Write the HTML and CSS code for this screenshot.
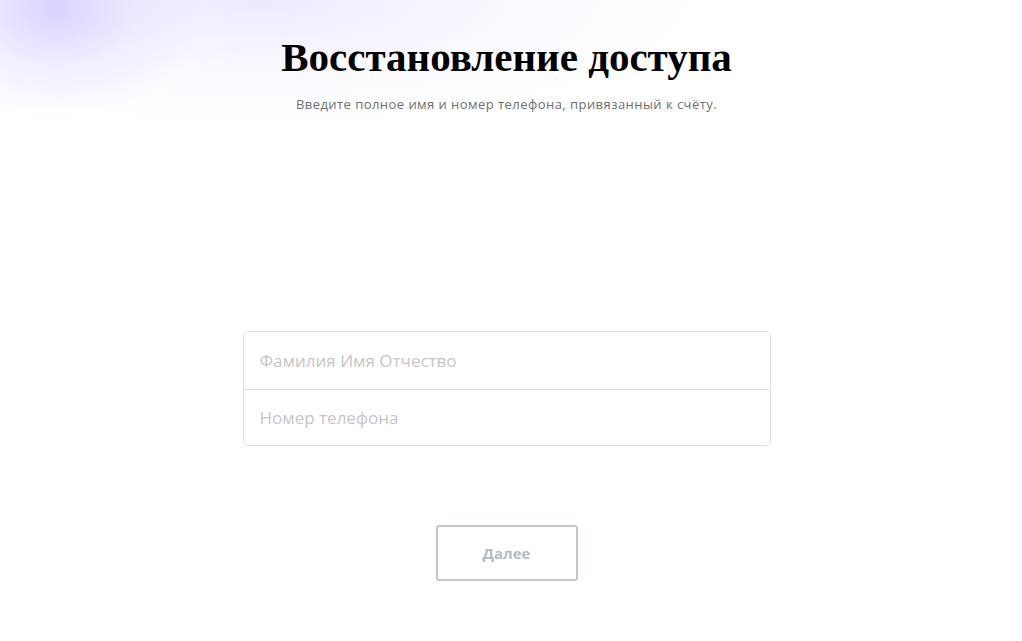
FILE: index.html
```html
<!DOCTYPE html>
<html lang="ru">
<head>
<meta charset="utf-8">
<title>Восстановление доступа</title>
<link rel="stylesheet" href="styles.css">
</head>
<body>
<main class="page">
  <header class="head">
    <h1 class="title">Восстановление доступа</h1>
    <p class="subtitle">Введите полное имя и номер телефона, привязанный к счёту.</p>
  </header>
  <form class="form">
    <div class="fields">
      <input class="field" type="text" placeholder="Фамилия Имя Отчество">
      <input class="field" type="tel" placeholder="Номер телефона">
    </div>
    <button class="next" type="button">Далее</button>
  </form>
</main>
</body>
</html>
```
FILE: styles.css
```css
* { box-sizing: border-box; }
html, body { margin: 0; height: 100%; }
body {
  background:
    radial-gradient(ellipse 150px 110px at 55px 8px, rgba(212,205,255,0.85), rgba(225,220,255,0.4) 55%, rgba(255,255,255,0) 100%),
    radial-gradient(ellipse 440px 125px at 260px 0px, rgba(232,228,255,0.8), rgba(242,240,255,0.4) 55%, rgba(255,255,255,0) 100%),
    #fff;
  font-family: "Open Sans", "Liberation Sans", sans-serif;
}
.page {
  display: flex;
  flex-direction: column;
  align-items: center;
  padding-top: 34px;
  padding-right: 9px;
}
.head { text-align: center; }
.title {
  margin: 0;
  font-family: "Liberation Serif", "Times New Roman", serif;
  font-weight: 700;
  font-size: 41px;
  line-height: 47px;
  color: #000;
}
.subtitle {
  margin: 14px 0 0;
  font-size: 13px;
  line-height: 18px;
  color: #6f6f6f;
  letter-spacing: 0.45px;
}
.form {
  display: flex;
  flex-direction: column;
  align-items: center;
  margin-top: 218px;
}
.fields {
  width: 528px;
  border: 1px solid #dedede;
  border-radius: 5px;
  display: flex;
  flex-direction: column;
  overflow: hidden;
}
.field {
  height: 56.5px;
  border: 0;
  padding: 0 16px;
  font-family: "Open Sans", "Liberation Sans", sans-serif;
  font-size: 17px;
  color: #333;
  background: #fff;
  outline: none;
}
.field + .field { border-top: 1px solid #dedede; }
.field::placeholder { color: #c6c6c6; }
.next {
  margin-top: 79px;
  width: 142px;
  height: 56px;
  border: 2px solid #c2c8d1;
  border-radius: 3px;
  background: #fff;
  font-family: "Open Sans", "Liberation Sans", sans-serif;
  font-weight: 700;
  font-size: 15px;
  color: #b4bac4;
  cursor: pointer;
}
```
